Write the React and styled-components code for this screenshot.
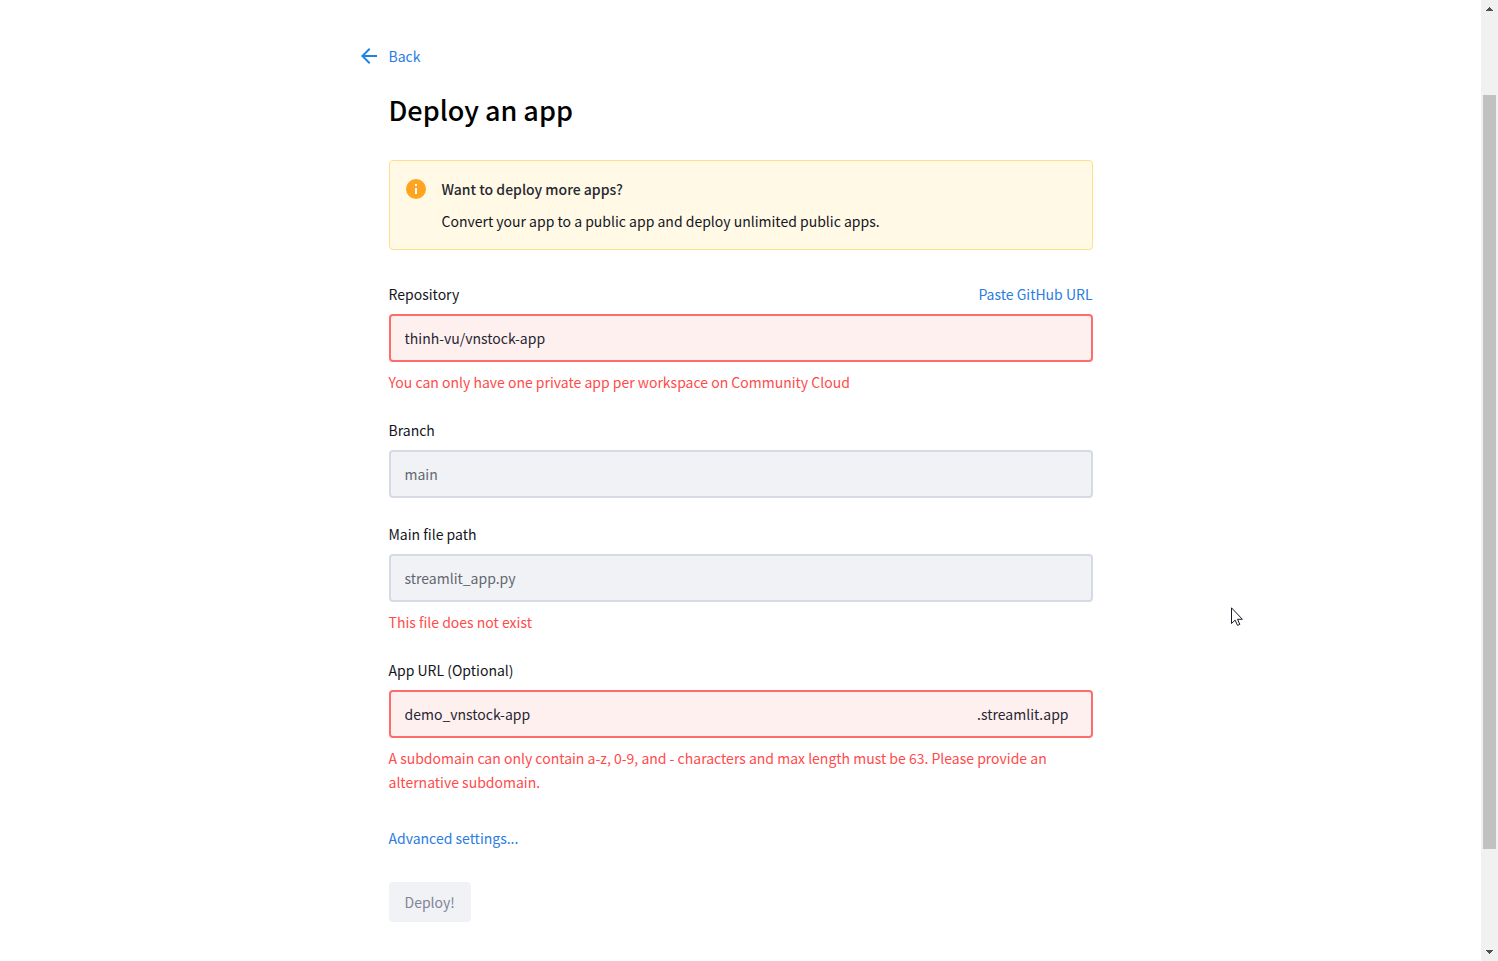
import React from "react";
import styled, { createGlobalStyle, css } from "styled-components";

const GlobalStyle = createGlobalStyle`
  *, *::before, *::after { box-sizing: border-box; }
  body {
    margin: 0;
    background: #fff;
    color: #14151d;
    font-family: "Source Sans Pro", "Noto Sans CJK SC", sans-serif;
    font-size: 14px;
    line-height: 24px;
  }
`;

const Page = styled.div`
  display: flex;
  height: 100vh;
  overflow: hidden;
`;

const Content = styled.main`
  flex: 1;
  min-width: 0;
  padding: 44px 32px 0;
  overflow: hidden;
`;

const Form = styled.form`
  display: flex;
  flex-direction: column;
  gap: 24px;
  width: 100%;
  max-width: 704px;
  margin: 0 auto;
`;

const Link = styled.a`
  color: #2a7de1;
  text-decoration: none;
`;

const BackLink = styled(Link)`
  display: flex;
  align-items: center;
  align-self: flex-start;
  gap: 8px;
  margin-left: -32px;
`;

const Title = styled.h1`
  margin: 0;
  color: #000;
  font-size: 27px;
  font-weight: 500;
  line-height: 36px;
`;

const Notice = styled.section`
  display: flex;
  gap: 14px;
  margin: 8px 0;
  padding: 16px 14px;
  border: 1px solid #ffe08a;
  border-radius: 4px;
  background: #fff9e6;
`;

const NoticeText = styled.div`
  display: flex;
  flex-direction: column;
  gap: 8px;
`;

const NoticeTitle = styled.h2`
  margin: 0;
  color: #262730;
  font-size: inherit;
  font-weight: 500;
  line-height: inherit;
`;

const Paragraph = styled.p`
  margin: 0;
`;

const FieldGroup = styled.div`
  display: flex;
  flex-direction: column;
  gap: 8px;
`;

const LabelRow = styled.div`
  display: flex;
  justify-content: space-between;
`;

const invalid = css`
  border-color: #ff6c6c;
  background: #fff0f0;
`;

const InputBox = styled.div`
  display: flex;
  align-items: center;
  height: 48px;
  padding: 0 14px;
  border: 2px solid #d5dae5;
  border-radius: 4px;
  background: #f0f2f6;
  ${(p) => p.$invalid && invalid}
`;

const TextInput = styled.input`
  flex: 1;
  min-width: 0;
  height: 24px;
  padding: 0;
  border: 0;
  outline: 0;
  background: transparent;
  color: #262730;
  font: inherit;

  &:disabled { color: #646770; }
`;

const Suffix = styled.span`
  padding-right: 8px;
  color: #262730;
`;

const ErrorText = styled.p`
  margin: 0;
  color: #ff4b4b;
`;

const DeployButton = styled.button`
  align-self: flex-start;
  height: 40px;
  padding: 0 16px;
  border: 0;
  border-radius: 4px;
  background: #f0f2f6;
  color: #808495;
  font: inherit;
`;

const FormFooter = styled.div`
  display: flex;
  flex-direction: column;
  align-items: flex-start;
  gap: 32px;
  padding-top: 8px;
`;

const ScrollTrack = styled.div`
  display: flex;
  flex-direction: column;
  width: 17px;
  background: #f1f1f1;
`;

const ArrowCell = styled.div`
  display: flex;
  align-items: flex-start;
  justify-content: center;
  height: 17px;
  padding-top: ${(p) => (p.$down ? 6 : 7)}px;
`;

const ScrollGap = styled.div`
  flex: ${(p) => p.$share} 0 0;
`;

const ScrollThumb = styled.div`
  flex: 754 0 0;
  margin: 0 2px;
  background: #c1c1c1;
`;

const Cursor = styled.svg`
  position: absolute;
  left: 1231px;
  top: 607px;
  pointer-events: none;
`;

function Field({ id, label, value, disabled, isInvalid, suffix, error, action }) {
  return (
    <FieldGroup>
      <LabelRow>
        <label htmlFor={id}>{label}</label>
        {action}
      </LabelRow>
      <InputBox $invalid={isInvalid}>
        <TextInput id={id} type="text" defaultValue={value} disabled={disabled} spellCheck={false} />
        {suffix && <Suffix>{suffix}</Suffix>}
      </InputBox>
      {error && <ErrorText>{error}</ErrorText>}
    </FieldGroup>
  );
}

export default function App() {
  return (
    <Page>
      <GlobalStyle />
      <Content>
        <Form onSubmit={(e) => e.preventDefault()}>
          <BackLink href="#back">
            <svg width="24" height="24" viewBox="0 0 24 24" fill="#1c83e1" aria-hidden="true">
              <path d="M20 11H7.83l5.59-5.59L12 4l-8 8 8 8 1.41-1.41L7.83 13H20v-2z" />
            </svg>
            Back
          </BackLink>
          <Title>Deploy an app</Title>
          <Notice>
            <svg width="24" height="24" viewBox="0 0 24 24" aria-hidden="true">
              <circle cx="12" cy="12" r="10" fill="#ffa421" />
              <path d="M11 7h2v2h-2zM11 11h2v6h-2z" fill="#fff" />
            </svg>
            <NoticeText>
              <NoticeTitle>Want to deploy more apps?</NoticeTitle>
              <Paragraph>Convert your app to a public app and deploy unlimited public apps.</Paragraph>
            </NoticeText>
          </Notice>
          <Field
            id="repository"
            label="Repository"
            value="thinh-vu/vnstock-app"
            isInvalid
            error="You can only have one private app per workspace on Community Cloud"
            action={<Link href="#paste">Paste GitHub URL</Link>}
          />
          <Field id="branch" label="Branch" value="main" disabled />
          <Field
            id="path"
            label="Main file path"
            value="streamlit_app.py"
            disabled
            error="This file does not exist"
          />
          <Field
            id="url"
            label="App URL (Optional)"
            value="demo_vnstock-app"
            isInvalid
            suffix=".streamlit.app"
            error="A subdomain can only contain a-z, 0-9, and - characters and max length must be 63. Please provide an alternative subdomain."
          />
          <FormFooter>
            <Link href="#advanced">Advanced settings...</Link>
            <DeployButton type="submit" disabled>Deploy!</DeployButton>
          </FormFooter>
        </Form>
      </Content>
      <ScrollTrack aria-hidden="true">
        <ArrowCell>
          <svg width="7" height="4" viewBox="0 0 7 4" shapeRendering="crispEdges">
            <path d="M3 0h1v1h1v1h1v1h1v1H0V3h1V2h1V1h1z" fill="#505050" />
          </svg>
        </ArrowCell>
        <ScrollGap $share={78} />
        <ScrollThumb />
        <ScrollGap $share={95} />
        <ArrowCell $down>
          <svg width="7" height="4" viewBox="0 0 7 4" shapeRendering="crispEdges">
            <path d="M0 0h7v1H6v1H5v1H4v1H3V3H2V2H1V1H0z" fill="#505050" />
          </svg>
        </ArrowCell>
      </ScrollTrack>
      <Cursor width="13" height="20" viewBox="0 0 13 20" aria-hidden="true">
        <path
          d="M.5.8v15.7l3.6-3.4 2.4 5.3 2.3-1-2.3-5.1h4.9z"
          fill="#fff"
          stroke="#1a1a24"
          strokeWidth="1"
        />
      </Cursor>
    </Page>
  );
}
